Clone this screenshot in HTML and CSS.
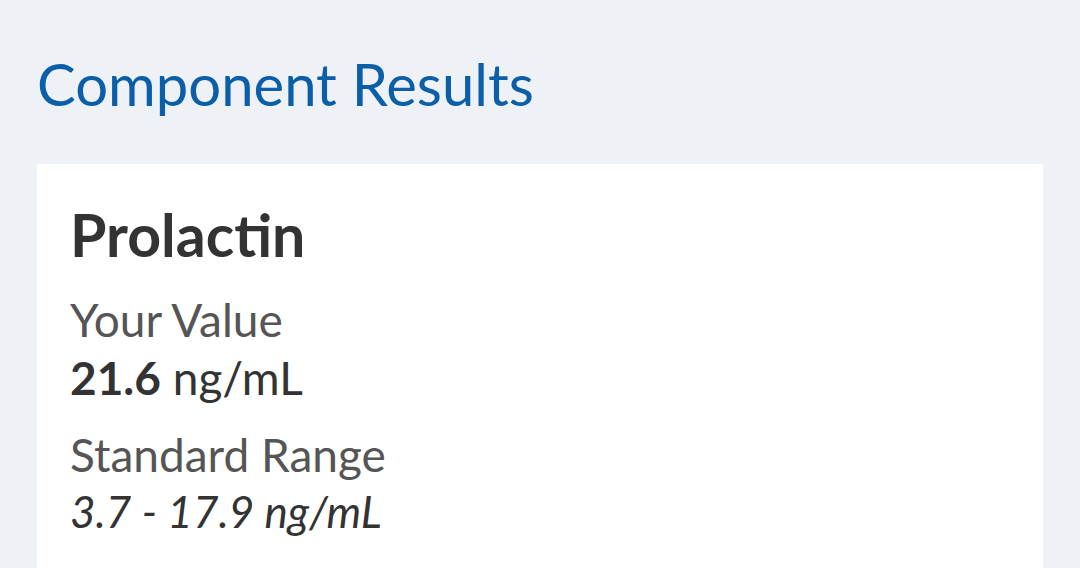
FILE: index.html
```html
<!DOCTYPE html>
<html>
<head>
<meta charset="utf-8">
<link rel="stylesheet" href="styles.css">
</head>
<body>
<main class="page">
  <h1 class="section-title">Component Results</h1>
  <section class="card">
    <h2 class="component-name">Prolactin</h2>
    <div class="field">
      <div class="field-label">Your Value</div>
      <div class="field-value"><strong class="num">21.6</strong> ng/mL</div>
    </div>
    <div class="field">
      <div class="field-label">Standard Range</div>
      <div class="field-range">3.7 - 17.9 ng/mL</div>
    </div>
  </section>
</main>
</body>
</html>
```
FILE: styles.css
```css
html, body {
  margin: 0;
  padding: 0;
  background: #eef2f7;
  height: 100%;
  overflow: hidden;
}
body {
  font-family: "Lato", "Open Sans", sans-serif;
  color: #333333;
}
.page {
  box-sizing: border-box;
  height: 100vh;
  padding: 48px 37px 0 37px;
  display: flex;
  flex-direction: column;
}
.section-title {
  margin: 0 0 44px 0;
  font-size: 58px;
  line-height: 72px;
  font-weight: 400;
  color: #0b5ea8;
}
.card {
  flex: 1;
  background: #ffffff;
  padding: 36px 33px 0 33px;
  display: flex;
  flex-direction: column;
}
.component-name {
  margin: 0;
  font-size: 59px;
  line-height: 70px;
  font-weight: 700;
  color: #333333;
}
.field {
  display: flex;
  flex-direction: column;
  margin-top: 21px;
}
.field + .field {
  margin-top: 19px;
}
.field-label {
  font-size: 46px;
  line-height: 58px;
  color: #555555;
}
.field-value {
  font-size: 46px;
  line-height: 58px;
  color: #333333;
}
.num {
  font-weight: 700;
}
.field-range {
  font-size: 44px;
  line-height: 55px;
  font-style: italic;
  color: #333333;
}
```
